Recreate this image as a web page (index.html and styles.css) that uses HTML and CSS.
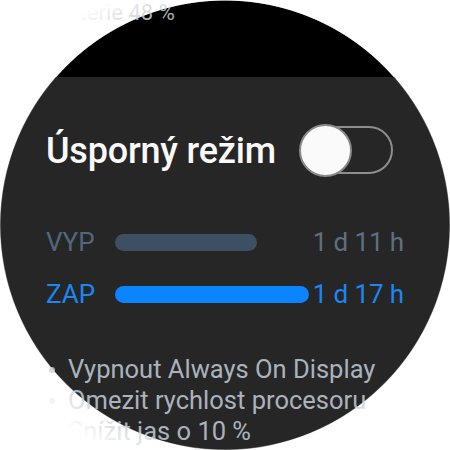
FILE: index.html
```html
<!DOCTYPE html>
<html lang="cs">
<head>
    <meta charset="UTF-8">
    <meta name="viewport" content="width=device-width, initial-scale=1.0">
    <title>Úsporný režim</title>

    <link rel="stylesheet" href="styles.css">
</head>

<body>
  <div class="screen">
    <div class="status">Baterie 48 %</div>

    <div class="card">
      <div class="title-row">
        <h1>Úsporný režim</h1>
        <div class="toggle">
          <div class="track"></div>
          <div class="thumb"></div>
        </div>
      </div>

      <div class="stats">
        <div class="stat off">
          <span class="label">VYP</span>
          <div class="bar-wrap"><div class="bar" style="width:142px"></div></div>
          <span class="value">1 d 11 h</span>
        </div>
        <div class="stat on">
          <span class="label">ZAP</span>
          <div class="bar-wrap"><div class="bar" style="width:194px"></div></div>
          <span class="value">1 d 17 h</span>
        </div>
      </div>

      <ul class="features">
        <li>Vypnout Always On Display</li>
        <li>Omezit rychlost procesoru</li>
        <li>Snížit jas o 10 %</li>
        <li>Vypnout síť (mimo hodinky)</li>
      </ul>
    </div>
  </div>
</body>
</html>
```

FILE: styles.css
```css
body {
  margin: 0;
  background: #fff;
  font-family: Roboto, "Noto Sans", sans-serif;
}

.screen {
  position: relative;
  width: 450px;
  height: 450px;
  overflow: hidden;
  isolation: isolate;
  background: radial-gradient(circle 225px at 225px 225px, #000 224px, rgba(0,0,0,0) 225px);
}

/* soft white mask round the watch face */
.screen::after {
  content: "";
  position: absolute;
  inset: 0;
  z-index: 2;
  pointer-events: none;
  background: radial-gradient(circle at 225px 225px, rgba(255,255,255,0) 224px, rgba(255,255,255,0.5) 225px, #fff 255px);
}

.status {
  height: 77px;
  padding-left: 54px;
  font-size: 22px;
  line-height: 26px;
  color: #a8b0b8;
  box-sizing: border-box;
}

.card {
  position: relative;
  z-index: 1;
  height: 373px;
  padding: 47px 46px 0 46px;
  box-sizing: border-box;
}

.card::before {
  content: "";
  position: absolute;
  inset: 0;
  z-index: -1;
  background: #262626;
  clip-path: circle(225px at 225px 148px);
}

.title-row {
  display: flex;
  align-items: center;
  justify-content: space-between;
  padding-right: 11px;
  height: 53px;
}

h1 {
  margin: 0;
  font-size: 36px;
  font-weight: 500;
  color: #fafafa;
  letter-spacing: -0.2px;
}

.toggle {
  position: relative;
  width: 94px;
  height: 53px;
}

.track {
  position: absolute;
  left: 1px;
  right: 0;
  top: 2px;
  height: 48px;
  border: 2px solid #8e8e8e;
  border-radius: 26px;
  box-sizing: border-box;
}

.thumb {
  position: absolute;
  left: 0;
  top: 0;
  width: 53px;
  height: 53px;
  border-radius: 50%;
  background: #fafafa;
  border: 2px solid #8a8a8a;
  box-sizing: border-box;
}

.stats {
  margin-top: 50px;
  display: flex;
  flex-direction: column;
  gap: 22px;
}

.stat {
  display: flex;
  align-items: center;
  height: 30px;
  font-size: 26px;
  white-space: nowrap;
}

.label {
  width: 69px;
  flex: none;
}

.bar-wrap {
  flex: 1;
  min-width: 0;
}

.bar {
  height: 17px;
  border-radius: 9px;
}

.value {
  flex: none;
  text-align: right;
  letter-spacing: -0.1px;
}

.off {
  color: #52677b;
}

.off .bar {
  background: #3d5063;
}

.off .value {
  color: #5d7083;
}

.on {
  color: #1a87f2;
}

.on .bar {
  background: #0a84ff;
}

.features {
  list-style: none;
  margin: 45px 0 0 0;
  padding: 0 0 0 22px;
  font-size: 25.5px;
  line-height: 31px;
  color: #a9b3bd;
}

.features li {
  position: relative;
  white-space: nowrap;
}

.features li::before {
  content: "";
  position: absolute;
  left: -19px;
  top: 13px;
  width: 6px;
  height: 6px;
  border-radius: 50%;
  background: #a9b3bd;
}
```
